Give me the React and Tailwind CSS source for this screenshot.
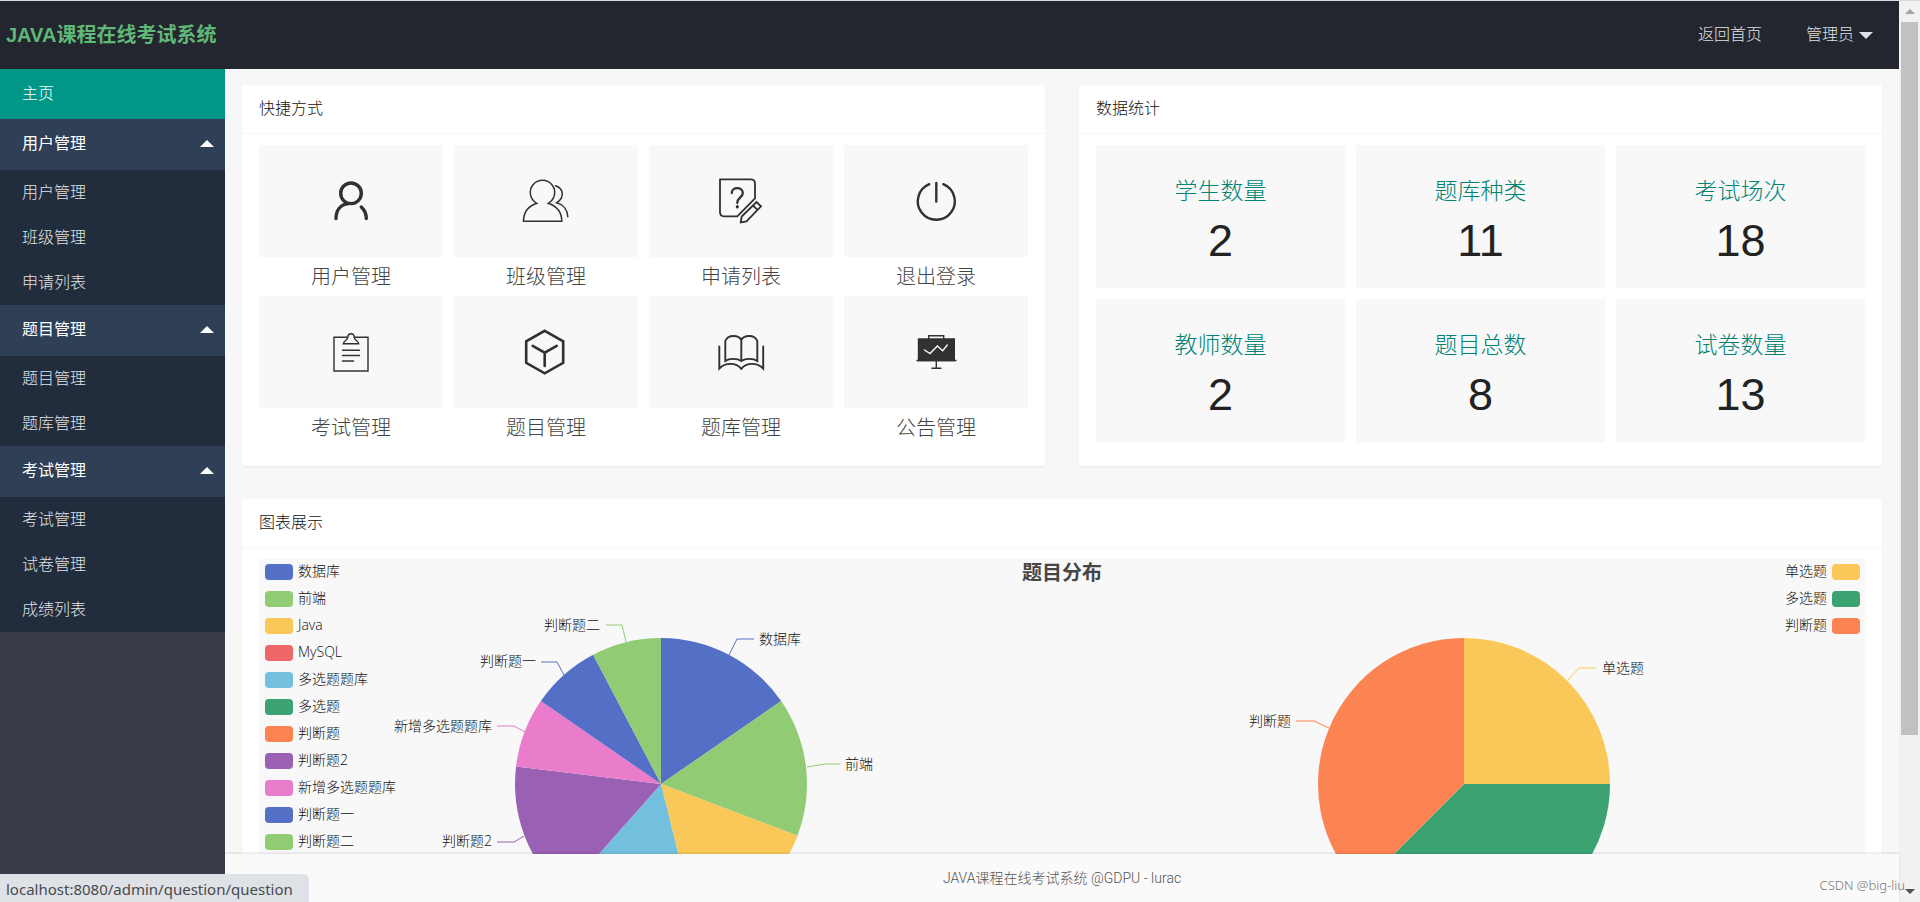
const navGroups = [
  { title: '用户管理', items: ['用户管理', '班级管理', '申请列表'] },
  { title: '题目管理', items: ['题目管理', '题库管理'] },
  { title: '考试管理', items: ['考试管理', '试卷管理', '成绩列表'] },
];

const stats = [
  { label: '学生数量', value: 2 },
  { label: '题库种类', value: 11 },
  { label: '考试场次', value: 18 },
  { label: '教师数量', value: 2 },
  { label: '题目总数', value: 8 },
  { label: '试卷数量', value: 13 },
];

const bankData = [
  { name: '数据库', value: 2, color: '#5470c6', line: '368,96 376,80 393,80', text: [398, 79, 'start'] },
  { name: '前端', value: 2, color: '#91cc75', line: '446,208 464,205 479,205', text: [484, 204, 'start'] },
  { name: 'Java', value: 2, color: '#fac858' },
  { name: 'MySQL', value: 0, color: '#ee6666' },
  { name: '多选题题库', value: 2, color: '#73c0de' },
  { name: '多选题', value: 0, color: '#3ba272' },
  { name: '判断题', value: 0, color: '#fc8452' },
  { name: '判断题2', value: 2, color: '#9a60b4', line: '163,277 153,283 136,283', text: [131, 281, 'end'] },
  { name: '新增多选题题库', value: 1, color: '#ea7ccc', line: '164,173 153,167 136,167', text: [131, 166, 'end'] },
  { name: '判断题一', value: 1, color: '#5470c6', line: '203,116 196,103 180,103', text: [175, 101, 'end'] },
  { name: '判断题二', value: 1, color: '#91cc75', line: '265,83 261,66 245,66', text: [239, 65, 'end'] },
];

const typeData = [
  { name: '单选题', value: 2, color: '#fac858', line: '404,121 415,109 432,109', text: [438, 108, 'start'] },
  { name: '多选题', value: 3, color: '#3ba272' },
  { name: '判断题', value: 3, color: '#fc8452', line: '165,169 150,162 132,162', text: [127, 161, 'end'] },
];

const shortcuts = [
  {
    label: '用户管理',
    icon: (
      <g strokeWidth="3.4">
        <circle cx="24" cy="16.3" r="10.3" />
        <path d="M9 41.5C9 33.5 13.5 27.5 21.5 26.5M34.3 30C38 33.5 39.3 37 39.3 41.5" />
      </g>
    ),
  },
  {
    label: '班级管理',
    icon: (
      <g strokeWidth="1.5">
        <path d="M14.8 26.3A12.2 12.2 0 1 1 26.2 26.3C34 29 39.8 35 39.8 44.3H1.5C1.5 35 7 29 14.8 26.3Z" />
        <path d="M33.5 8.7C42 11.5 42.5 21 34.8 25.7C41.5 27.5 45.5 33 45.8 39.7" />
      </g>
    ),
  },
  {
    label: '申请列表',
    icon: (
      <g strokeWidth="1.8">
        <path d="M3 2.3H33.5Q38 2.3 38 6.5V21.3L20.3 39.3H7Q3 39.3 3 35.3Z" />
        <path d="M14.8 16C14.8 9.5 25.8 9.5 25.8 16C25.8 20.5 20.3 20.5 20.3 26" strokeWidth="2.3" />
        <path d="M20.3 29.6V30" strokeWidth="3" />
        <path d="M39.5 25L44 29.3L29.5 44.3L23.7 45.3L24.7 39.5ZM36 28.5L40.5 32.8" />
      </g>
    ),
  },
  {
    label: '退出登录',
    icon: (
      <g strokeWidth="2.4">
        <path d="M17.3 7.2A18.5 18.5 0 1 0 31.3 7.2" />
        <path d="M24.3 6V24.5" />
      </g>
    ),
  },
  {
    label: '考试管理',
    icon: (
      <g strokeWidth="1.4">
        <path d="M20.5 9.3H7V43H41V9.3H27.500" />
        <path d="M16.3 15.7C17 12.5 20.8 12 20.8 9.5C20.8 4.5 27.2 4.5 27.2 9.5C27.2 12 31 12.5 31.7 15.7Z" />
        <path d="M15.5 22.3H32.5M15.5 27.5H32.5M15.5 33H26.5" />
      </g>
    ),
  },
  {
    label: '题目管理',
    icon: (
      <g strokeWidth="2.6">
        <path d="M22.7 2.8L41.2 13.3V34.8L22.7 45.3L4.2 34.8V13.3Z" />
        <path d="M10.7 17.8L22.7 24.7L34.7 17.8M22.7 24.7V38" />
      </g>
    ),
  },
  {
    label: '题库管理',
    icon: (
      <g strokeWidth="1.9">
        <path d="M24.3 33V12C22 7 11 6 8.3 13V33C12 30.3 20 30 24.3 33C28.6 30 36.6 30.3 40.3 33V13C37.6 6 26.6 7 24.3 12" />
        <path d="M2.3 18.5V40.5C8 34.5 19 34 24.3 40.8C29.6 34 40.5 34.5 46.2 40.5V18.5" />
      </g>
    ),
  },
  {
    label: '公告管理',
    icon: (
      <g strokeWidth="1.4">
        <path d="M6.5 11H42.3V32.5H6.5Z" fill="#2f3133" />
        <path d="M5 32.5H44M16.7 11V7.8H31.7V11M24.3 32.5V40.3M20 40.3H29" />
        <path d="M12.5 22L18 25.5L25.3 18L30.7 22.7L35.3 17" stroke="#f8f8f8" />
      </g>
    ),
  },
];

const CX = 300;
const CY = 225;
const R = 146;

function slicePath(from, to) {
  const a = from * Math.PI * 2;
  const b = to * Math.PI * 2;
  const large = to - from > 0.5 ? 1 : 0;
  return `M${CX} ${CY}L${CX + R * Math.sin(a)} ${CY - R * Math.cos(a)}A${R} ${R} 0 ${large} 1 ${CX + R * Math.sin(b)} ${CY - R * Math.cos(b)}Z`;
}

function Pie({ data, title }) {
  const total = data.reduce((sum, d) => sum + d.value, 0);
  let start = 0;
  const slices = data.map((d) => {
    const from = start / total;
    start += d.value;
    return { ...d, from, to: start / total };
  });

  return (
    <svg width="600" height="450" viewBox="0 0 600 450" role="img" aria-label={title} className="shrink-0">
      {slices.filter((s) => s.value > 0).map((s) => (
        <path key={s.name} d={slicePath(s.from, s.to)} fill={s.color} />
      ))}
      {slices.filter((s) => s.line).map((s) => (
        <g key={s.name}>
          <polyline points={s.line} fill="none" stroke={s.color} />
          <text x={s.text[0]} y={s.text[1]} textAnchor={s.text[2]} dominantBaseline="central" className="fill-[#111111] text-[14px] font-light">
            {s.name}
          </text>
        </g>
      ))}
    </svg>
  );
}

function Legend({ data, right }) {
  return (
    <ul className={`absolute top-[5px] flex flex-col gap-[11px] ${right ? 'right-[5px]' : 'left-[6px]'}`}>
      {data.map((d) => (
        <li key={d.name} className={`flex h-4 items-center gap-[5px] text-[14px] font-light text-[#111111] ${right ? 'flex-row-reverse' : ''}`}>
          <span className="h-4 w-7 rounded" style={{ backgroundColor: d.color }} />
          <span className="pb-[2px] leading-4">{d.name}</span>
        </li>
      ))}
    </ul>
  );
}

function Card({ title, children }) {
  return (
    <section className="rounded-[2px] bg-white shadow-[0_1px_2px_rgba(0,0,0,0.06)]">
      <h2 className="flex h-[49px] items-center border-b border-[#f6f6f6] px-[17px] text-base font-light text-[#111111]">{title}</h2>
      <div className="px-[17px] pt-[11px] pb-[19px]">{children}</div>
    </section>
  );
}

function Caret({ down }) {
  return (
    <svg width="14" height="7" viewBox="0 0 14 7" fill="currentColor" aria-hidden="true">
      <path d={down ? 'M0 0H14L7 7Z' : 'M0 7H14L7 0Z'} />
    </svg>
  );
}

function Sidebar() {
  return (
    <nav className="w-[225px] shrink-0 bg-[#393d49] text-base leading-6">
      <a href="#home" className="flex h-[50px] items-center bg-[#009688] px-[22px] font-light text-white">主页</a>
      {navGroups.map((group) => (
        <div key={group.title}>
          <button type="button" aria-expanded="true" className="flex h-[51px] w-full items-center justify-between bg-[#2f4056] pr-[11px] pb-[2px] pl-[22px] text-white">
            {group.title}
            <Caret />
          </button>
          <ul className="bg-[#212d3c]">
            {group.items.map((item) => (
              <li key={item}>
                <a href="#page" className="flex h-[45px] items-center px-[22px] font-light text-[#e0e3e6]">{item}</a>
              </li>
            ))}
          </ul>
        </div>
      ))}
    </nav>
  );
}

function Scrollbar() {
  return (
    <div className="flex w-[21px] shrink-0 flex-col items-center justify-between bg-[#f1f1f1]" aria-hidden="true">
      <div className="flex h-[21px] w-full items-center justify-center text-[#a3a3a3]">
        <svg width="10" height="5" viewBox="0 0 10 5" fill="currentColor"><path d="M0 5H10L5 0Z" /></svg>
      </div>
      <div className="flex w-full flex-1 flex-col items-center">
        <div className="h-[83%] w-[17px] bg-[#c1c1c1]" />
      </div>
      <div className="flex h-[21px] w-full items-center justify-center text-[#505050]">
        <svg width="10" height="5" viewBox="0 0 10 5" fill="currentColor"><path d="M0 0H10L5 5Z" /></svg>
      </div>
    </div>
  );
}

export default function App() {
  return (
    <div className="relative flex h-screen overflow-hidden border-t border-[#d5dbe0] bg-[#f7f7f7] font-['Liberation_Sans','Noto_Sans_CJK_SC',sans-serif]">
      <div className="flex min-w-0 flex-1 flex-col">
        <header className="flex h-[68px] shrink-0 items-center justify-between bg-[#23262e] pr-[26px] pl-[6px]">
          <h1 className="text-xl font-bold text-[#5fb878]">JAVA课程在线考试系统</h1>
          <div className="flex items-center gap-11 text-base font-light text-[#e0e1e3]">
            <a href="#index">返回首页</a>
            <button type="button" className="flex items-center gap-[5px]">
              管理员
              <Caret down />
            </button>
          </div>
        </header>

        <div className="flex min-h-0 flex-1">
          <Sidebar />
          <div className="flex min-w-0 flex-1 flex-col">
            <main className="min-h-0 flex-1 overflow-hidden px-[17px] pt-4">
              <div className="grid grid-cols-2 gap-x-[34px]">
                <Card title="快捷方式">
                  <ul className="grid grid-cols-4 gap-x-[11px]">
                    {shortcuts.map((s) => (
                      <li key={s.label}>
                        <a href="#shortcut" className="block text-center">
                          <span className="flex h-28 items-center justify-center bg-[#f8f8f8]">
                            <svg width="48" height="48" viewBox="0 0 48 48" fill="none" stroke="#2f3133" strokeLinecap="round" aria-hidden="true">
                              {s.icon}
                            </svg>
                          </span>
                          <span className="block h-[39px] text-xl leading-10 font-light text-[#444444]">{s.label}</span>
                        </a>
                      </li>
                    ))}
                  </ul>
                </Card>
                <Card title="数据统计">
                  <ul className="grid grid-cols-3 gap-[11px]">
                    {stats.map((s) => (
                      <li key={s.label} className="flex h-[143px] flex-col items-center bg-[#f8f8f8] pt-7 text-center">
                        <h3 className="text-[23px] leading-9 font-light text-[#008375]">{s.label}</h3>
                        <p className="text-[45px] leading-16 text-[#222222]">{s.value}</p>
                      </li>
                    ))}
                  </ul>
                </Card>
              </div>

              <div className="mt-[33px]">
                <Card title="图表展示">
                  <div className="relative grid h-[450px] grid-cols-2 bg-[#f8f8f8] font-['Open_Sans','Noto_Sans_CJK_SC',sans-serif]">
                    <div className="flex justify-center">
                      <Pie data={bankData} title="题库分布" />
                    </div>
                    <div className="flex justify-center">
                      <Pie data={typeData} title="题型分布" />
                    </div>
                    <h3 className="absolute inset-x-0 top-0 text-center text-xl leading-7 font-bold text-[#464646]">题目分布</h3>
                    <Legend data={bankData} />
                    <Legend data={typeData} right />
                  </div>
                </Card>
              </div>
            </main>
            <footer className="z-10 flex h-12 shrink-0 items-center justify-center bg-[#fafafa] font-['Roboto','Noto_Sans_CJK_SC',sans-serif] text-sm font-light text-[#555555] shadow-[0_-1px_2px_rgba(0,0,0,0.12)]">
              JAVA课程在线考试系统 @GDPU - lurac
            </footer>
          </div>
        </div>
      </div>

      <Scrollbar />

      <div className="absolute bottom-0 left-0 z-20 h-7 rounded-tr-md bg-[#dee1e6] pr-4 pl-[6px] font-['Noto_Sans',sans-serif] text-[15px] leading-[30px] text-[#484b4f]">
        localhost:8080/admin/question/question
      </div>
      <div className="absolute right-[15px] bottom-[7px] z-20 font-['Noto_Sans',sans-serif] text-[13px] leading-5 font-light text-[#777777]">CSDN @big-liu</div>
    </div>
  );
}
